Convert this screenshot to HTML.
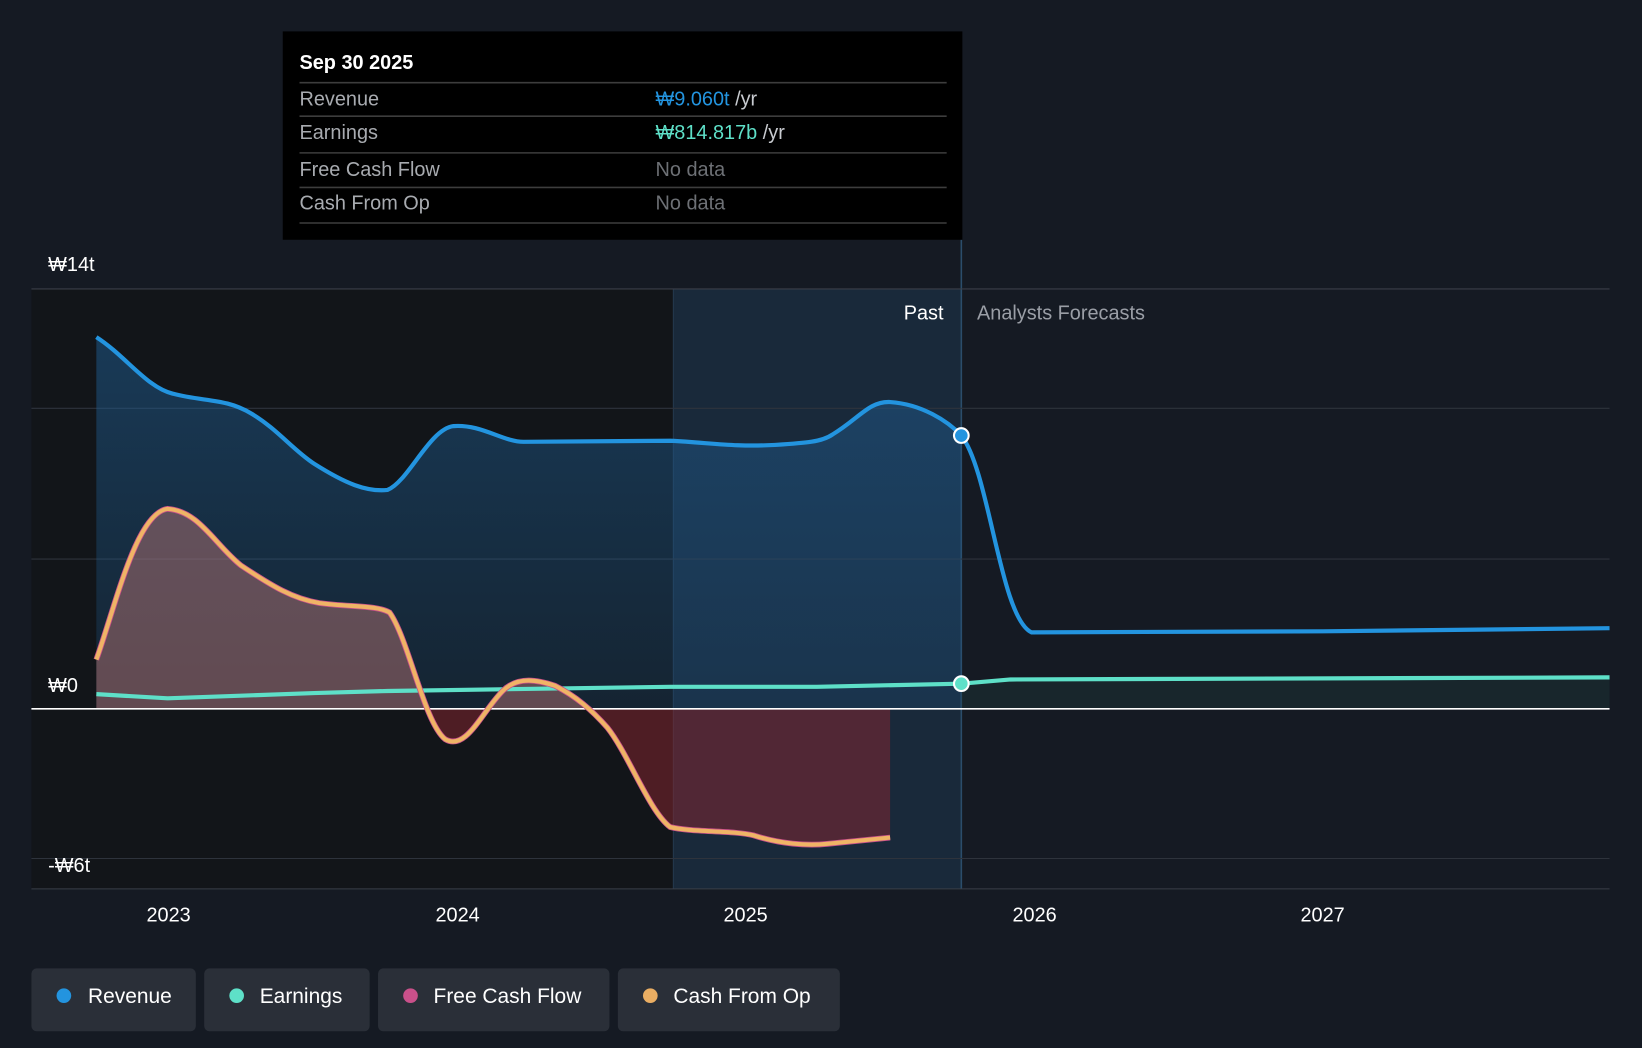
<!DOCTYPE html>
<html><head><meta charset="utf-8"><style>
html,body{margin:0;padding:0;background:#151a23;width:1642px;height:1048px;overflow:hidden}
svg{display:block}
text{font-family:"Liberation Sans",sans-serif}
</style></head><body>
<svg width="1642" height="1048" viewBox="0 0 1568 1001" preserveAspectRatio="none">
<defs>
<clipPath id="above"><rect x="0" y="0" width="1568" height="677"/></clipPath>
<clipPath id="below"><rect x="0" y="677" width="1568" height="400"/></clipPath>
<linearGradient id="rev" x1="0" y1="0" x2="0" y2="1"><stop offset="0" stop-color="#1f5f95" stop-opacity="0.5"/><stop offset="1" stop-color="#1f5f95" stop-opacity="0.2"/></linearGradient>
</defs>
<rect width="1568" height="1001" fill="#151a23"/>
<rect x="30" y="276" width="613" height="573" fill="#121519"/>
<rect x="643" y="276" width="275" height="573" fill="#19293a"/>
<line x1="643" y1="276" x2="643" y2="849" stroke="#24384c" stroke-width="1"/>
<line x1="918" y1="229" x2="918" y2="849" stroke="#2b4d6b" stroke-width="1.5"/>
<g stroke="#2e333c" stroke-width="1">
<line x1="30" y1="276" x2="1537" y2="276" stroke="#3a3f48"/>
<line x1="30" y1="390" x2="1537" y2="390"/>
<line x1="30" y1="534" x2="1537" y2="534"/>
<line x1="30" y1="820" x2="1537" y2="820"/>
</g>
<line x1="30" y1="849" x2="1537" y2="849" stroke="#3a3f48"/>
<path d="M92,322 C120,340 140,370 165,376 C195,384 215,380 240,395 C265,410 280,430 300,443 C330,462 350,470 370,468 C390,460 410,410 433,407 C460,405 480,422 500,422 L640,421 C680,423 700,427 740,425 C770,423 785,422 795,415 C820,400 830,383 850,384 C880,386 905,402 918,416 L918,677 L92,677 Z" fill="url(#rev)"/>
<path d="M918,653 L965,649 L1537,647 L1537,677 L918,677Z" fill="#1d3a3a" opacity="0.4"/>
<path d="M92,630 C110,580 130,490 160,486 C190,488 205,520 230,540 C260,560 280,572 305,576 C335,580 360,578 372,585 C390,610 405,690 425,706 C445,718 460,680 480,660 C495,645 515,650 530,655 C550,665 565,678 580,695 C600,720 620,775 640,790 C660,795 700,793 720,798 C745,806 770,808 790,806 L850,800 L850,677 L92,677 Z" fill="#c07a78" opacity="0.45" clip-path="url(#above)"/>
<path d="M92,630 C110,580 130,490 160,486 C190,488 205,520 230,540 C260,560 280,572 305,576 C335,580 360,578 372,585 C390,610 405,690 425,706 C445,718 460,680 480,660 C495,645 515,650 530,655 C550,665 565,678 580,695 C600,720 620,775 640,790 C660,795 700,793 720,798 C745,806 770,808 790,806 L850,800 L850,677 L92,677 Z" fill="#8a2530" opacity="0.5" clip-path="url(#below)"/>
<line x1="30" y1="677" x2="1537" y2="677" stroke="#ffffff" stroke-width="1.5"/>
<path d="M92,322 C120,340 140,370 165,376 C195,384 215,380 240,395 C265,410 280,430 300,443 C330,462 350,470 370,468 C390,460 410,410 433,407 C460,405 480,422 500,422 L640,421 C680,423 700,427 740,425 C770,423 785,422 795,415 C820,400 830,383 850,384 C880,386 905,402 918,416 C945,450 955,590 985,604 L1263,603 L1537,600" fill="none" stroke="#2394df" stroke-width="4"/>
<path d="M92,663 L160,667 L300,662 L370,660 L640,656 L780,656 L918,653 L965,649 L1537,647" fill="none" stroke="#5ee0c8" stroke-width="4"/>
<path d="M92,630 C110,580 130,490 160,486 C190,488 205,520 230,540 C260,560 280,572 305,576 C335,580 360,578 372,585 C390,610 405,690 425,706 C445,718 460,680 480,660 C495,645 515,650 530,655 C550,665 565,678 580,695 C600,720 620,775 640,790 C660,795 700,793 720,798 C745,806 770,808 790,806 L850,800" fill="none" stroke="#c9508a" stroke-width="5.5"/>
<path d="M92,630 C110,580 130,490 160,486 C190,488 205,520 230,540 C260,560 280,572 305,576 C335,580 360,578 372,585 C390,610 405,690 425,706 C445,718 460,680 480,660 C495,645 515,650 530,655 C550,665 565,678 580,695 C600,720 620,775 640,790 C660,795 700,793 720,798 C745,806 770,808 790,806 L850,800" fill="none" stroke="#efb466" stroke-width="4"/>
<circle cx="918" cy="416" r="7" fill="#2394df" stroke="#fff" stroke-width="2"/>
<circle cx="918" cy="653" r="7" fill="#5ee0c8" stroke="#fff" stroke-width="2"/>
<g fill="#fff" font-size="19">
<text x="46" y="259">₩14t</text>
<text x="46" y="661">₩0</text>
<text x="46" y="833">-₩6t</text>
<text x="161" y="880" text-anchor="middle">2023</text>
<text x="437" y="880" text-anchor="middle">2024</text>
<text x="712" y="880" text-anchor="middle">2025</text>
<text x="988" y="880" text-anchor="middle">2026</text>
<text x="1263" y="880" text-anchor="middle">2027</text>
<text x="901" y="305" text-anchor="end">Past</text>
</g>
<text x="933" y="305" fill="#9a9ea6" font-size="19">Analysts Forecasts</text>
<rect x="270" y="30" width="649" height="199" fill="#000"/>
<text x="286" y="66" fill="#fff" font-size="19" font-weight="bold">Sep 30 2025</text>
<g stroke="#3d3d3d" stroke-width="1.5">
<line x1="286" y1="79" x2="904" y2="79"/><line x1="286" y1="111" x2="904" y2="111"/>
<line x1="286" y1="146" x2="904" y2="146"/><line x1="286" y1="179" x2="904" y2="179"/>
<line x1="286" y1="213" x2="904" y2="213"/>
</g>
<g font-size="19" fill="#a8abb0">
<text x="286" y="101">Revenue</text><text x="286" y="133">Earnings</text>
<text x="286" y="168">Free Cash Flow</text><text x="286" y="200">Cash From Op</text>
</g>
<text x="626" y="101" font-size="19" fill="#2394df">₩9.060t <tspan fill="#c8cbd0">/yr</tspan></text>
<text x="626" y="133" font-size="19" fill="#5ee0c8">₩814.817b <tspan fill="#c8cbd0">/yr</tspan></text>
<text x="626" y="168" font-size="19" fill="#6d7075">No data</text>
<text x="626" y="200" font-size="19" fill="#6d7075">No data</text>
<g font-size="20" fill="#fff">
<rect x="30" y="925" width="157" height="60" rx="5" fill="#2a2f38"/>
<circle cx="61" cy="951" r="7" fill="#2394df"/><text x="84" y="958">Revenue</text>
<rect x="195" y="925" width="158" height="60" rx="5" fill="#2a2f38"/>
<circle cx="226" cy="951" r="7" fill="#5ee0c8"/><text x="248" y="958">Earnings</text>
<rect x="361" y="925" width="221" height="60" rx="5" fill="#2a2f38"/>
<circle cx="392" cy="951" r="7" fill="#c9508a"/><text x="414" y="958">Free Cash Flow</text>
<rect x="590" y="925" width="212" height="60" rx="5" fill="#2a2f38"/>
<circle cx="621" cy="951" r="7" fill="#eaae63"/><text x="643" y="958">Cash From Op</text>
</g>
</svg>
</body></html>
